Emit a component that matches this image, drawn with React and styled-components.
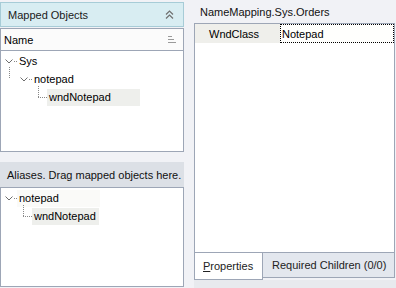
import React from "react";
import styled, { createGlobalStyle } from "styled-components";

const GlobalStyle = createGlobalStyle`
  html, body {
    margin: 0;
    padding: 0;
    background: #f1f2f6;
  }
  body {
    font-family: "Liberation Sans", Arial, sans-serif;
    font-size: 11px;
    color: #000;
    white-space: nowrap;
  }
`;

function Chevron() {
  return (
    <svg width="8" height="5" viewBox="0 0 8 5" style={{ display: "block" }}>
      <path d="M0.5 0.5 L4 4 L7.5 0.5" fill="none" stroke="#6e6e6e" strokeWidth="1" />
    </svg>
  );
}

function CollapseIcon() {
  return (
    <svg width="9" height="9" viewBox="0 0 9 9">
      <path d="M1 4.5 L4.5 1 L8 4.5 M1 8.5 L4.5 5 L8 8.5" fill="none" stroke="#707070" strokeWidth="1.2" />
    </svg>
  );
}

function SortIcon() {
  return (
    <svg width="8" height="7" viewBox="0 0 8 7">
      <path d="M0 0.5 H4 M0 3.5 H6 M0 6.5 H8" stroke="#9a9a9a" strokeWidth="1" />
    </svg>
  );
}

function TreeRow({ level, expander, branch, label, highlight, faint }) {
  return (
    <Row $level={level}>
      {branch && <Branch />}
      {expander ? (
        <Expander>
          <Chevron />
        </Expander>
      ) : (
        <Connector />
      )}
      <Label $highlight={highlight} $faint={faint}>
        {label}
      </Label>
    </Row>
  );
}

export default function App() {
  return (
    <>
      <GlobalStyle />
      <Page>
        <LeftColumn>
          <PanelHeader>
            <span>Mapped Objects</span>
            <CollapseIcon />
          </PanelHeader>
          <TreeBox>
            <ColumnHeader>
              <span>Name</span>
              <SortIcon />
            </ColumnHeader>
            <TreeBody>
              <TreeRow level={0} expander label="Sys" />
              <TreeRow level={1} expander branch label="notepad" />
              <TreeRow level={2} label="wndNotepad" highlight={93} />
            </TreeBody>
          </TreeBox>
          <AliasBar>Aliases. Drag mapped objects here.</AliasBar>
          <TreeBox $grow>
            <TreeBody>
              <TreeRow level={0} expander label="notepad" faint={83} />
              <TreeRow level={1} label="wndNotepad" highlight={67} />
            </TreeBody>
          </TreeBox>
        </LeftColumn>
        <RightColumn>
          <Title>NameMapping.Sys.Orders</Title>
          <Grid>
            <PropRow>
              <PropName>WndClass</PropName>
              <PropValue>Notepad</PropValue>
            </PropRow>
          </Grid>
          <Tabs>
            <Tab $active>
              <u>P</u>roperties
            </Tab>
            <Tab>Required Children (0/0)</Tab>
          </Tabs>
          <BottomBand />
        </RightColumn>
      </Page>
    </>
  );
}

const Page = styled.div`
  width: 396px;
  height: 288px;
  display: grid;
  grid-template-columns: 184px 201px;
  column-gap: 10px;
  overflow: hidden;
  background: #f1f2f6;
`;

const LeftColumn = styled.div`
  display: flex;
  flex-direction: column;
  padding-top: 2px;
  padding-bottom: 1px;
`;

const PanelHeader = styled.div`
  height: 25px;
  box-sizing: border-box;
  border: 1px solid #a7ccd7;
  background: #d8edf2;
  display: flex;
  align-items: center;
  justify-content: space-between;
  padding: 0 9px 0 7px;
  color: #1a1a1a;
`;

const TreeBox = styled.div`
  box-sizing: border-box;
  border: 1px solid #9da6b6;
  background: #fff;
  margin-top: ${(p) => (p.$grow ? "0" : "1px")};
  height: ${(p) => (p.$grow ? "auto" : "124px")};
  flex: ${(p) => (p.$grow ? "1" : "none")};
`;

const ColumnHeader = styled.div`
  height: 22px;
  box-sizing: border-box;
  border-bottom: 1px solid #9da6b6;
  background: #fbfbfb;
  display: flex;
  align-items: center;
  justify-content: space-between;
  padding: 0 7px 0 3px;
`;

const TreeBody = styled.div`
  padding-top: 1px;
`;

const Row = styled.div`
  height: 18px;
  display: flex;
  align-items: center;
  position: relative;
  padding-left: ${(p) => 4 + p.$level * 15}px;
`;

const Branch = styled.span`
  position: absolute;
  left: 8px;
  top: -3px;
  height: 11px;
  border-left: 1px dotted #888;
`;

const Expander = styled.span`
  width: 12px;
  display: flex;
  align-items: center;
  position: relative;
  &::after {
    content: "";
    position: absolute;
    left: 9px;
    top: 50%;
    width: 3px;
    border-top: 1px dotted #888;
  }
`;

const Connector = styled.span`
  width: 12px;
  height: 18px;
  position: relative;
  &::before {
    content: "";
    position: absolute;
    left: 3px;
    top: -2px;
    height: 11px;
    border-left: 1px dotted #888;
  }
  &::after {
    content: "";
    position: absolute;
    left: 3px;
    top: 9px;
    width: 9px;
    border-top: 1px dotted #888;
  }
`;

const Label = styled.span`
  height: 17px;
  line-height: 17px;
  padding-left: 2px;
  box-sizing: border-box;
  width: ${(p) => (p.$highlight ? `${p.$highlight}px` : p.$faint ? `${p.$faint}px` : "auto")};
  background: ${(p) => (p.$highlight ? "#eeefec" : p.$faint ? "#fafaf8" : "transparent")};
`;

const AliasBar = styled.div`
  margin-top: 10px;
  height: 25px;
  display: flex;
  align-items: center;
  padding-left: 7px;
  background: #dce0e6;
  color: #111;
`;

const RightColumn = styled.div`
  display: flex;
  flex-direction: column;
`;

const Title = styled.div`
  height: 23px;
  display: flex;
  align-items: center;
  padding-left: 6px;
  padding-top: 1px;
  box-sizing: border-box;
  color: #111;
`;

const Grid = styled.div`
  height: 230px;
  box-sizing: border-box;
  border: 1px solid #9da6b6;
  background: #fff;
`;

const PropRow = styled.div`
  display: grid;
  grid-template-columns: 85px 1fr;
  height: 19px;
`;

const PropName = styled.div`
  background: #efefeb;
  display: flex;
  align-items: center;
  padding-left: 14px;
`;

const PropValue = styled.div`
  border: 1px dotted #000;
  display: flex;
  align-items: center;
  padding-left: 1px;
  background: #fffffd;
`;

const Tabs = styled.div`
  display: flex;
  height: 27px;
`;

const Tab = styled.div`
  box-sizing: border-box;
  height: ${(p) => (p.$active ? "27px" : "26px")};
  display: flex;
  align-items: center;
  color: #222;
  background: ${(p) => (p.$active ? "#fff" : "#e3e7ee")};
  border: 1px solid #9da6b6;
  border-top: ${(p) => (p.$active ? "none" : "1px solid #9da6b6")};
  border-left: ${(p) => (p.$active ? "1px solid #9da6b6" : "none")};
  margin-top: ${(p) => (p.$active ? "0" : "-1px")};
  padding: ${(p) => (p.$active ? "0 0 0 8px" : "0 0 0 9px")};
  width: ${(p) => (p.$active ? "69px" : "132px")};
  u {
    text-decoration: underline;
  }
`;

const BottomBand = styled.div`
  flex: 1;
  background: #e8eaee;
  margin-right: -1px;
`;
